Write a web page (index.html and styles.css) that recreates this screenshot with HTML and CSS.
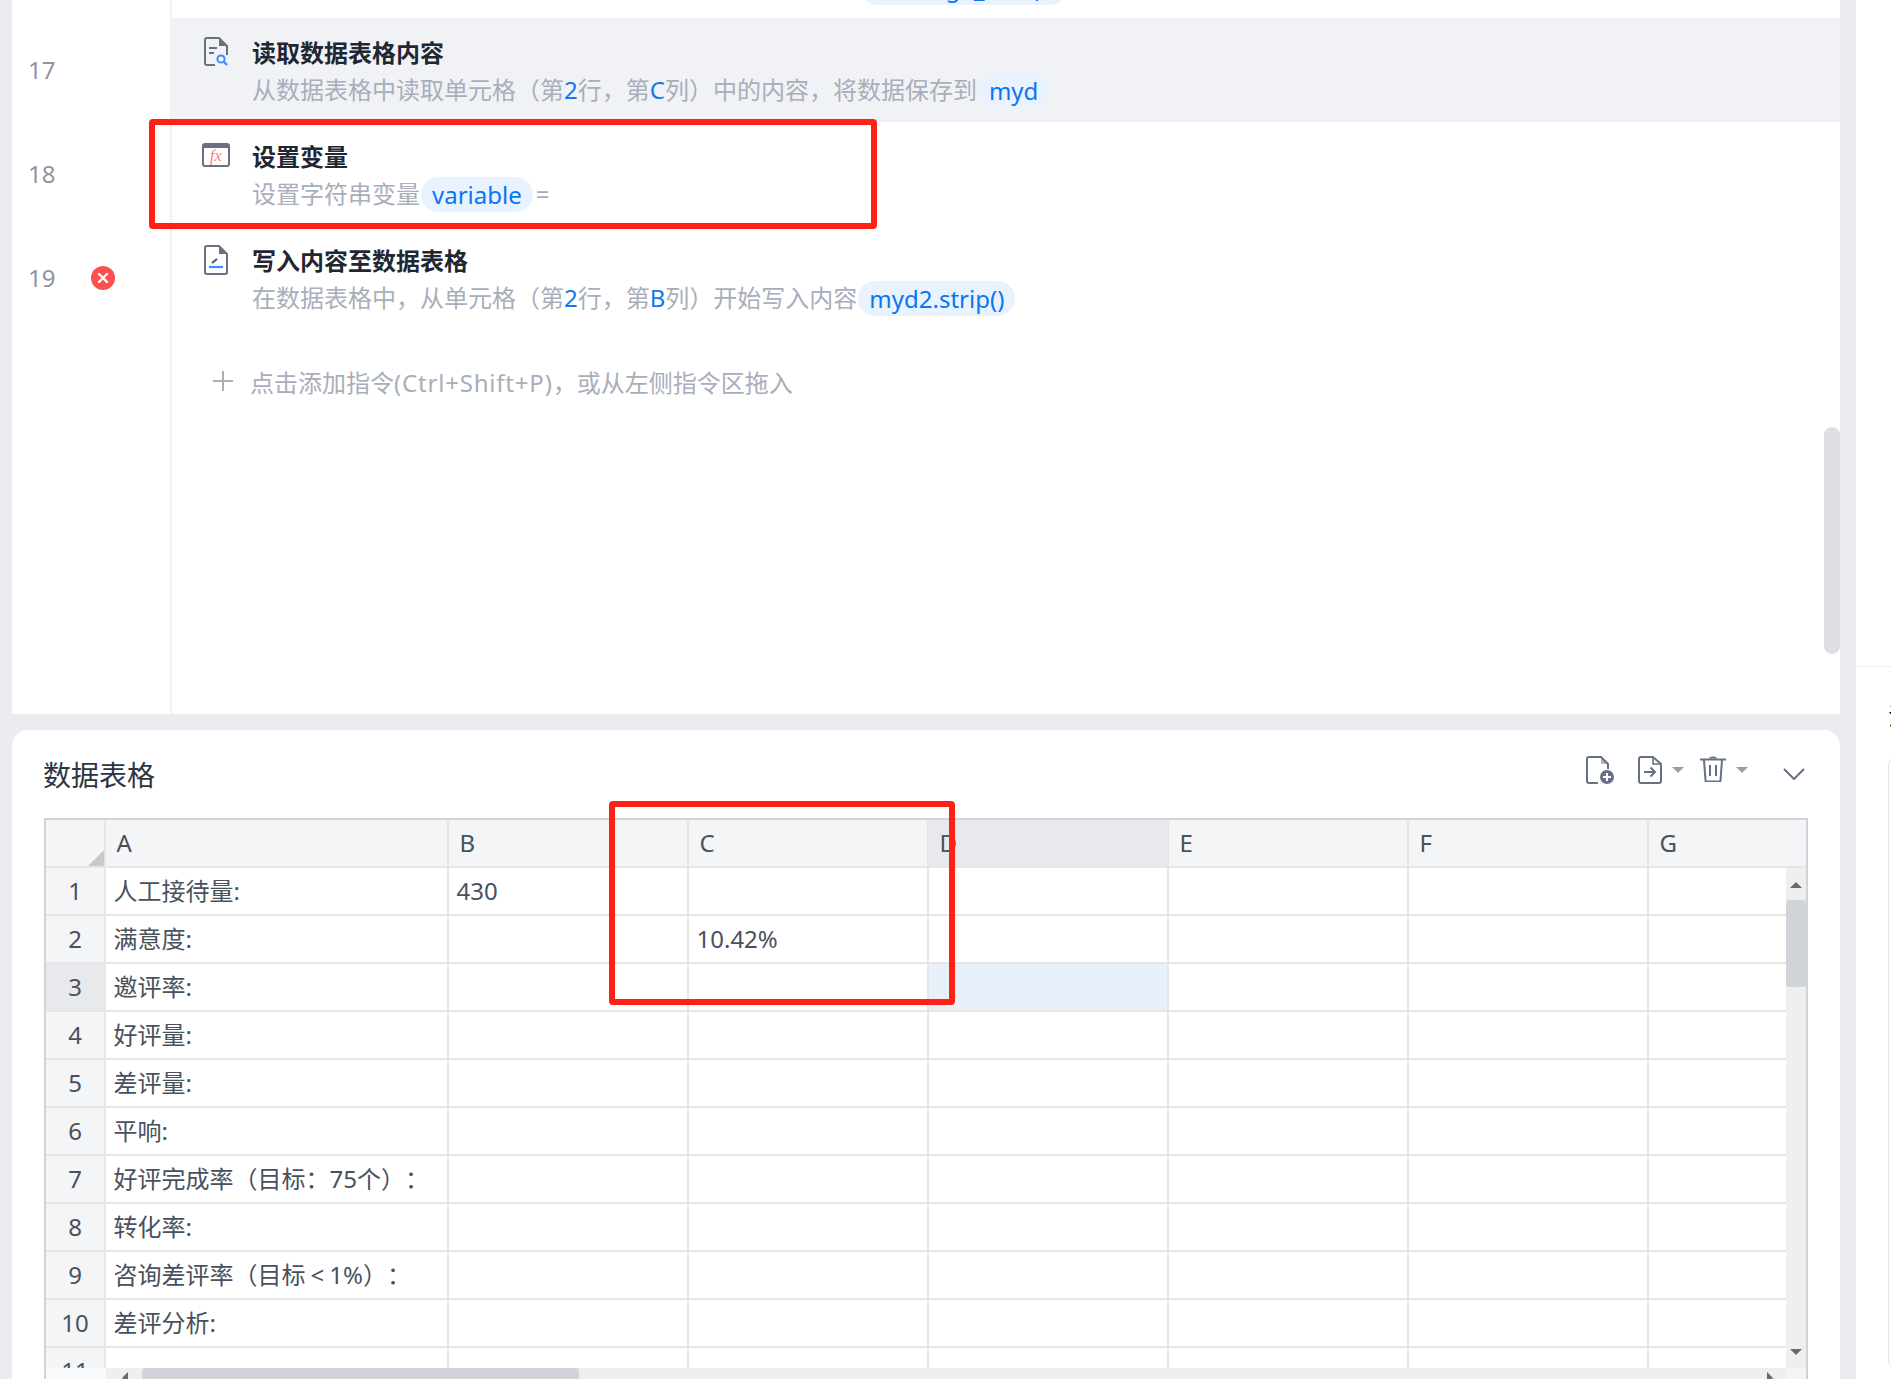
FILE: index.html
```html
<!DOCTYPE html>
<html lang="zh-CN">
<head>
<meta charset="utf-8">
<title>数据表格</title>
<link rel="stylesheet" href="styles.css">
</head>
<body>
<div class="workspace">
  <main class="main">
    <section class="editor">
      <div class="line line-stub">
        <div class="gutter"></div>
        <div class="stub-body"><span class="pill stub-pill">message_data)</span></div>
      </div>

      <div class="line line-active">
        <div class="gutter"><span class="num">17</span></div>
        <div class="cmd">
          <span class="cmd-icon">
            <svg class="ico-file" viewBox="0 0 24 30" fill="none"><path d="M11 28H3a2 2 0 0 1-2-2V3a2 2 0 0 1 2-2h12l8 8v9" stroke="#6b7080" stroke-width="2"/><path d="M15 1v8h8z" fill="#6b7080"/><path d="M5 11h8M5 16h5" stroke="#6b7080" stroke-width="2"/><circle cx="17" cy="22" r="3.600" stroke="#3d8bfd" stroke-width="2"/><path d="M20 25l3 3" stroke="#3d8bfd" stroke-width="2.400"/></svg>
          </span>
          <div class="cmd-text">
            <div class="title">读取数据表格内容</div>
            <div class="desc">从数据表格中读取单元格（第<em>2</em>行，第<em>C</em>列）中的内容，将数据保存到<span class="pill">myd</span></div>
          </div>
        </div>
      </div>

      <div class="line">
        <div class="gutter"><span class="num">18</span></div>
        <div class="cmd">
          <span class="cmd-icon cmd-icon-fx">
            <svg class="ico-fx" viewBox="0 0 28 24" fill="none"><rect x="1" y="1" width="26" height="22" rx="2" stroke="#6b7080" stroke-width="2"/><rect x="1" y="1" width="26" height="4" fill="#6b7080"/><text x="8" y="18" class="fx-text">fx</text></svg>
          </span>
          <div class="cmd-text">
            <div class="title">设置变量</div>
            <div class="desc">设置字符串变量<span class="pill">variable</span>=</div>
          </div>
        </div>
      </div>

      <div class="line">
        <div class="gutter">
          <span class="num">19</span>
          <svg class="ico-error" viewBox="0 0 24 24"><circle cx="12" cy="12" r="12" fill="#ff5050"/><path d="M8 8l8 8M16 8l-8 8" stroke="#fff" stroke-width="2.400" stroke-linecap="round"/></svg>
        </div>
        <div class="cmd">
          <span class="cmd-icon">
            <svg class="ico-file" viewBox="0 0 24 30" fill="none"><path d="M3 29a2 2 0 0 1-2-2V3a2 2 0 0 1 2-2h12l8 8v18a2 2 0 0 1-2 2z" stroke="#6b7080" stroke-width="2"/><path d="M15 1v8h8z" fill="#6b7080"/><path d="M8 18l5-4" stroke="#4a4f5c" stroke-width="2"/><path d="M5 22h14" stroke="#3d8bfd" stroke-width="2.200"/></svg>
          </span>
          <div class="cmd-text">
            <div class="title">写入内容至数据表格</div>
            <div class="desc">在数据表格中，从单元格（第<em>2</em>行，第<em>B</em>列）开始写入内容<span class="pill">myd2.strip()</span></div>
          </div>
        </div>
      </div>

      <div class="line line-fill">
        <div class="gutter"></div>
        <div class="add">
          <svg class="ico-plus" viewBox="0 0 20 20" fill="none"><path d="M10 0v20M0 10h20" stroke="#a8aeba" stroke-width="2"/></svg>
          <span>点击添加指令<span class="latin">(Ctrl+Shift+P)</span>，或从左侧指令区拖入</span>
        </div>
      </div>

      <div class="editor-thumb"></div>
    </section>

    <section class="card">
      <header class="card-head">
        <h2 class="card-title">数据表格</h2>
        <div class="tools">
          <svg class="t-add" viewBox="0 0 28 28" fill="none"><path d="M12 27H3a2 2 0 0 1-2-2V3a2 2 0 0 1 2-2h12l7 7v5" stroke="#667085" stroke-width="2"/><path d="M15 1v7h7z" fill="#667085" opacity=".5"/><circle cx="21" cy="21" r="7" fill="#667085"/><path d="M21 17v8M17 21h8" stroke="#fff" stroke-width="2"/></svg>
          <svg class="t-export" viewBox="0 0 24 28" fill="none"><path d="M3 27a2 2 0 0 1-2-2V3a2 2 0 0 1 2-2h12l8 7v17a2 2 0 0 1-2 2z" stroke="#667085" stroke-width="2"/><path d="M15 1v7h8" stroke="#667085" stroke-width="1.600"/><path d="M6 16h11M12.500 11.500l4.500 4.500-4.500 4.500" stroke="#667085" stroke-width="2"/></svg>
          <span class="caret"></span>
          <svg class="t-trash" viewBox="0 0 26 26" fill="none"><path d="M0 3.500h26" stroke="#667085" stroke-width="2"/><path d="M9 2.500a4 2 0 0 1 8 0z" fill="#667085"/><path d="M4 4l1.500 20.500a1 1 0 0 0 1 1h13a1 1 0 0 0 1-1L22 4" stroke="#667085" stroke-width="2"/><path d="M10 9v11M16 9v11" stroke="#667085" stroke-width="2"/></svg>
          <span class="caret"></span>
          <svg class="t-chevron" viewBox="0 0 22 12" fill="none"><path d="M1 1l10 10L21 1" stroke="#667085" stroke-width="2"/></svg>
        </div>
      </header>

      <div class="sheet">
        <div class="grid">
          <div class="hd corner"><span class="corner-mark"></span></div>
          <div class="hd">A</div><div class="hd">B</div><div class="hd">C</div><div class="hd hd-on">D</div><div class="hd">E</div><div class="hd">F</div><div class="hd">G</div>

          <div class="rn">1</div><div class="c">人工接待量:</div><div class="c">430</div><div class="c"></div><div class="c"></div><div class="c"></div><div class="c"></div><div class="c"></div>
          <div class="rn">2</div><div class="c">满意度:</div><div class="c"></div><div class="c">10.42%</div><div class="c"></div><div class="c"></div><div class="c"></div><div class="c"></div>
          <div class="rn rn-on">3</div><div class="c">邀评率:</div><div class="c"></div><div class="c"></div><div class="c c-on"></div><div class="c"></div><div class="c"></div><div class="c"></div>
          <div class="rn">4</div><div class="c">好评量:</div><div class="c"></div><div class="c"></div><div class="c"></div><div class="c"></div><div class="c"></div><div class="c"></div>
          <div class="rn">5</div><div class="c">差评量:</div><div class="c"></div><div class="c"></div><div class="c"></div><div class="c"></div><div class="c"></div><div class="c"></div>
          <div class="rn">6</div><div class="c">平响:</div><div class="c"></div><div class="c"></div><div class="c"></div><div class="c"></div><div class="c"></div><div class="c"></div>
          <div class="rn">7</div><div class="c"><span>好评完成率（目标：75个）：</span></div><div class="c"></div><div class="c"></div><div class="c"></div><div class="c"></div><div class="c"></div><div class="c"></div>
          <div class="rn">8</div><div class="c">转化率:</div><div class="c"></div><div class="c"></div><div class="c"></div><div class="c"></div><div class="c"></div><div class="c"></div>
          <div class="rn">9</div><div class="c"><span>咨询差评率（目标<span class="lt">&lt;</span>1%）：</span></div><div class="c"></div><div class="c"></div><div class="c"></div><div class="c"></div><div class="c"></div><div class="c"></div>
          <div class="rn">10</div><div class="c">差评分析:</div><div class="c"></div><div class="c"></div><div class="c"></div><div class="c"></div><div class="c"></div><div class="c"></div>
          <div class="rn">11</div><div class="c"></div><div class="c"></div><div class="c"></div><div class="c"></div><div class="c"></div><div class="c"></div><div class="c"></div>
        </div>

        <div class="vbar">
          <span class="arrow arrow-up"></span>
          <span class="vthumb"></span>
          <span class="arrow arrow-down"></span>
        </div>
        <div class="hbar">
          <span class="hcorner"></span>
          <span class="arrow arrow-left"></span>
          <span class="hthumb"></span>
          <span class="arrow arrow-right"></span>
          <span class="hend"></span>
        </div>
      </div>
    </section>

    <div class="mark mark-top"></div>
    <div class="mark mark-sheet"></div>
  </main>

  <aside class="side">
    <div class="side-top"></div>
    <div class="side-text">江</div>
    <div class="side-box"></div>
  </aside>
</div>
</body>
</html>
```

FILE: styles.css
```css
* { box-sizing: border-box; }
html, body { margin: 0; height: 100%; }
body {
  background: #ebecf0;
  font-family: "Noto Sans", "Noto Sans CJK SC", sans-serif;
  font-size: 24px;
  text-spacing-trim: space-all;
  overflow: hidden;
}
.workspace { display: flex; width: 1891px; height: 1379px; overflow: hidden; }
.main {
  position: relative;
  width: 1828px;
  margin-left: 12px;
  display: flex;
  flex-direction: column;
}
.side {
  width: 35px;
  margin-left: 16px;
  background: #fff;
  padding-left: 32px;
  overflow: hidden;
}

/* editor */
.editor {
  position: relative;
  height: 714px;
  background: #fff;
  display: flex;
  flex-direction: column;
}
.line { display: flex; height: 104px; }
.line-stub { height: 18px; }
.line-active { background: #f0f2f6; }
.line-fill { flex: 1; }
.gutter {
  width: 160px;
  flex: none;
  height: 100%;
  border-right: 2px solid #f0f1f3;
  padding-left: 16px;
  display: flex;
  align-items: center;
  gap: 36px;
  color: #8f95a0;
  line-height: 1;
  background: #fff;
}
.num { width: 27px; }
.ico-error { width: 24px; height: 24px; flex: none; }
.stub-body { flex: 1; overflow: hidden; padding-left: 688px; }
.cmd { display: flex; flex: 1; padding: 15px 0 0 32px; }
.cmd-icon { width: 48px; flex: none; padding-top: 4px; }
.cmd-icon-fx { margin-left: -2px; width: 50px; padding-top: 6px; }
.ico-file { display: block; width: 24px; height: 30px; }
.ico-fx { display: block; width: 28px; height: 24px; }
.fx-text {
  font-family: "Liberation Serif", serif;
  font-style: italic;
  font-size: 16px;
  fill: #ff7b7b;
}
.title {
  height: 38px;
  line-height: 40px;
  font-weight: 700;
  color: #1f2733;
  white-space: nowrap;
}
.desc {
  height: 38px;
  line-height: 38px;
  color: #a8aeba;
  white-space: nowrap;
}
.desc em { font-style: normal; color: #1478f0; }
.pill {
  display: inline-block;
  height: 35px;
  line-height: 35px;
  padding: 0 11px;
  margin: 2px 3px 0 1px;
  border-radius: 18px;
  background: #e9f2ff;
  color: #0b75f2;
  vertical-align: top;
}
.stub-pill { margin: -30px 0 0; width: 207px; padding: 0 13px; }
.add {
  display: flex;
  align-items: center;
  height: 44px;
  margin: 29px 0 0 41px;
  color: #a8aeba;
  white-space: nowrap;
}
.latin { letter-spacing: 0.8px; }
.ico-plus { width: 20px; height: 20px; margin-right: 17px; }
.editor-thumb {
  position: absolute;
  left: 1812px;
  top: 427px;
  width: 16px;
  height: 227px;
  border-radius: 8px;
  background: #dddfe2;
}

/* card */
.card {
  flex: 1;
  min-height: 0;
  margin-top: 16px;
  background: #fff;
  border-radius: 16px 16px 0 0;
  padding-left: 31px;
  display: flex;
  flex-direction: column;
}
.card-head {
  height: 88px;
  flex: none;
  display: flex;
  justify-content: space-between;
  padding: 25px 35px 0 0;
}
.card-title {
  margin: 0;
  font-size: 28px;
  font-weight: 400;
  line-height: 40px;
  color: #2c3440;
}
.tools { display: flex; align-items: flex-start; padding-top: 1px; }
.tools svg { display: block; }
.t-add { width: 28px; height: 28px; margin-right: 24px; }
.t-export { width: 24px; height: 28px; margin-right: 10px; }
.t-trash { width: 26px; height: 26px; margin: 0 10px 0 16px; }
.t-chevron { width: 22px; height: 12px; margin: 12px 0 0 35px; }
.caret {
  width: 0;
  height: 0;
  margin-top: 11px;
  border-left: 6px solid transparent;
  border-right: 6px solid transparent;
  border-top: 6px solid #9a9ea8;
}

/* sheet */
.sheet {
  position: relative;
  flex: 1;
  width: 1764px;
  margin-left: 1px;
  border: 2px solid #d0d3d8;
  border-bottom: 0;
  overflow: hidden;
  color: #48515d;
  line-height: 1;
}
.grid {
  display: grid;
  grid-template-columns: 60px 343px repeat(6, 240px);
  grid-auto-rows: 48px;
  width: 1843px;
}
.hd, .rn, .c {
  display: flex;
  align-items: center;
  border-right: 2px solid #e6e6e6;
  border-bottom: 2px solid #e6e6e6;
  white-space: nowrap;
}
.hd { background: #f4f5f7; padding-left: 10.500px; }
.hd-on { background: #e8e9ec; }
.corner { position: relative; }
.corner-mark {
  position: absolute;
  right: 0;
  bottom: 0;
  width: 16px;
  height: 16px;
  background: #c8c9cb;
  clip-path: polygon(100% 0, 100% 100%, 0 100%);
}
.rn { background: #f4f5f7; justify-content: center; }
.rn-on { background: #e8e9ec; }
.c { background: #fff; padding-left: 7.500px; }
.c-on { background: #e8f0fa; }
.lt { margin: 0 5px; }

.vbar {
  position: absolute;
  left: 1740px;
  top: 48px;
  width: 20px;
  bottom: 11px;
  background: #efefef;
  display: flex;
  flex-direction: column;
  align-items: center;
}
.vthumb {
  position: absolute;
  top: 32px;
  left: 0;
  width: 20px;
  height: 87px;
  border-radius: 3px;
  background: #d1d5d9;
}
.arrow { position: absolute; width: 0; height: 0; }
.arrow-up {
  top: 14px;
  border-left: 6px solid transparent;
  border-right: 6px solid transparent;
  border-bottom: 6px solid #666a74;
}
.arrow-down {
  bottom: 13px;
  border-left: 6px solid transparent;
  border-right: 6px solid transparent;
  border-top: 6px solid #666a74;
}
.hbar {
  position: absolute;
  left: 0;
  right: 0;
  bottom: 0;
  height: 11px;
  background: #efefef;
}
.hcorner { position: absolute; left: 0; top: 0; width: 60px; height: 11px; background: #f8f9fa; }
.hend { position: absolute; right: 0; top: 0; width: 20px; height: 11px; background: #f4f5f7; }
.hthumb {
  position: absolute;
  left: 96px;
  top: 0;
  width: 437px;
  height: 11px;
  border-radius: 3px 3px 0 0;
  background: #d1d5d9;
}
.arrow-left {
  left: 76px;
  top: 4px;
  border-top: 6px solid transparent;
  border-bottom: 6px solid transparent;
  border-right: 6px solid #666a74;
}
.arrow-right {
  left: 1721px;
  top: 4px;
  border-top: 6px solid transparent;
  border-bottom: 6px solid transparent;
  border-left: 6px solid #666a74;
}

/* red annotation boxes */
.mark {
  position: absolute;
  border: 6px solid #ff2116;
  border-radius: 4px;
  pointer-events: none;
}
.mark-top { left: 137px; top: 119px; width: 728px; height: 110px; }
.mark-sheet { left: 597px; top: 801px; width: 346px; height: 204px; }

/* right panel */
.side-top { height: 667px; border-bottom: 1px solid #eceef1; margin-left: -32px; }
.side-text { height: 90px; padding-top: 32px; line-height: 34px; color: #1f2733; white-space: nowrap; }
.side-box { height: 612px; width: 40px; border: 1px solid #e3e5e8; border-radius: 8px; }
```
